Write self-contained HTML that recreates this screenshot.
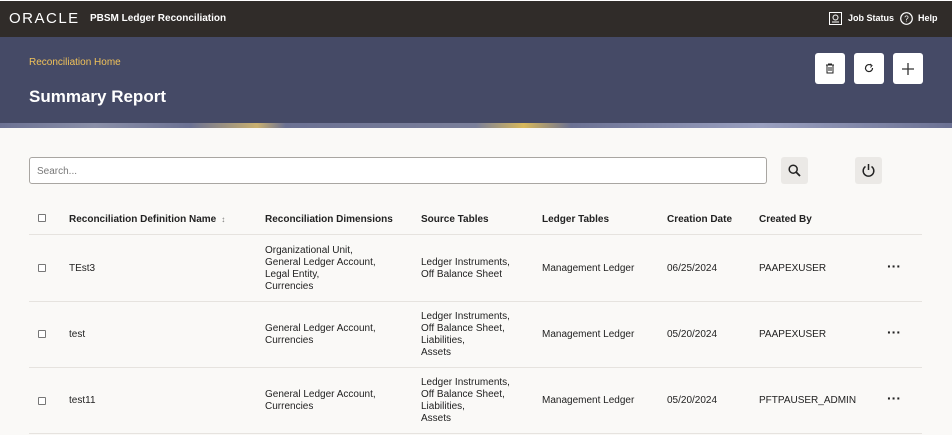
<!DOCTYPE html>
<html><head><meta charset="utf-8"><style>
*{margin:0;padding:0;box-sizing:border-box}
body{width:952px;height:435px;overflow:hidden;background:#faf9f7;font-family:"Liberation Sans",sans-serif;color:#222;position:relative}
.top{position:absolute;left:0;top:0;width:952px;height:37px;background:#302c29;border-top:1px solid #fff}
.band{position:absolute;left:0;top:37px;width:952px;height:86px;background:#454a66}
.pat{position:absolute;left:0;top:123px;width:952px;height:5px;background:linear-gradient(90deg,#6b7193 0,#8a8fa8 10%,#6b7193 20%,#c9b070 27%,#6b7193 30%,#7a7f9a 50%,#d8b85a 55%,#6b7193 60%,#9aa0c0 80%,#6b7193 100%)}
.abs{position:absolute;white-space:nowrap}
.btn{position:absolute;top:53px;width:30px;height:31px;background:#fff;border-radius:3px}
.gbtn{position:absolute;top:157px;width:27px;height:27px;background:#ebe9e6;border-radius:3px}
.search{position:absolute;left:29px;top:157px;width:738px;height:27px;border:1px solid #a9a6a2;border-radius:3px;background:#fff;font-size:10px;color:#777;padding:8px 7px}
.th{position:absolute;top:214px;font-size:10px;font-weight:bold;color:#222}
.line{position:absolute;left:29px;width:893px;height:1px;background:#e6e3df}
.td{position:absolute;font-size:10px;line-height:12px;color:#222}
.cb{position:absolute;left:38px;width:8px;height:8px;border:1px solid #777;border-radius:1px;background:#fff}
.dots{position:absolute;left:887px;font-size:14px;font-weight:bold;letter-spacing:0px}
</style></head><body>
<div class="top"></div>
<div class="abs" style="left:9px;top:10px;color:#fff;font-size:15px;letter-spacing:1.5px">ORACLE</div>
<div class="abs" style="left:90px;top:13px;color:#fff;font-size:10px;font-weight:bold">PBSM Ledger Reconciliation</div>
<svg class="abs" style="left:829px;top:12px" width="13" height="13" viewBox="0 0 13 13"><rect x="0.5" y="0.5" width="12" height="12" fill="none" stroke="#fff"/><circle cx="6.5" cy="5.5" r="2.5" fill="none" stroke="#fff"/><path d="M3 10h7" stroke="#fff"/></svg>
<div class="abs" style="left:848px;top:13px;color:#fff;font-size:9px;font-weight:bold">Job Status</div>
<svg class="abs" style="left:900px;top:12px" width="13" height="13" viewBox="0 0 13 13"><circle cx="6.5" cy="6.5" r="5.8" fill="none" stroke="#fff" stroke-width="1.2"/><text x="6.5" y="9.5" font-size="8" fill="#fff" text-anchor="middle" font-family="Liberation Sans">?</text></svg>
<div class="abs" style="left:918px;top:13px;color:#fff;font-size:9px;font-weight:bold">Help</div>
<div class="band"></div><div class="pat"></div>
<div class="abs" style="left:29px;top:57px;color:#f0c25a;font-size:10px">Reconciliation Home</div>
<div class="abs" style="left:29px;top:87px;color:#fff;font-size:17px;font-weight:bold">Summary Report</div>
<div class="btn" style="left:815px"><svg style="position:absolute;left:10px;top:10px" width="10" height="11" viewBox="0 0 10 11"><path d="M1 2h8M3.5 2V1h3v1M2 2v8h6V2M4 4v4M6 4v4" fill="none" stroke="#222"/></svg></div>
<div class="btn" style="left:854px"><svg style="position:absolute;left:10px;top:10px" width="10" height="10" viewBox="0 0 10 10"><path d="M8.5 5A3.5 3.5 0 1 1 7 2.2" fill="none" stroke="#222" stroke-width="1.2"/><path d="M6 1l2 1.5L6.5 4.5" fill="none" stroke="#222"/></svg></div>
<div class="btn" style="left:893px"><svg style="position:absolute;left:8px;top:9px" width="14" height="14" viewBox="0 0 14 14"><path d="M7 1v12M1 7h12" stroke="#333" stroke-width="1.3"/></svg></div>
<div class="search">Search...</div>
<div class="gbtn" style="left:781px"><svg style="position:absolute;left:7px;top:7px" width="13" height="13" viewBox="0 0 13 13"><circle cx="5.2" cy="5.2" r="4" fill="none" stroke="#222" stroke-width="1.5"/><path d="M8 8l4 4" stroke="#222" stroke-width="1.8"/></svg></div>
<div class="gbtn" style="left:855px"><svg style="position:absolute;left:6px;top:6px" width="15" height="15" viewBox="0 0 15 15"><path d="M4.5 3.5A5.3 5.3 0 1 0 10.5 3.5" fill="none" stroke="#222" stroke-width="1.5"/><path d="M7.5 1v6" stroke="#222" stroke-width="1.5"/></svg></div>
<div class="cb" style="top:214px"></div>
<div class="th" style="left:69px">Reconciliation Definition Name <span style="font-weight:normal;color:#777;font-size:8px">&nbsp;↕</span></div>
<div class="th" style="left:265px">Reconciliation Dimensions</div>
<div class="th" style="left:421px">Source Tables</div>
<div class="th" style="left:542px">Ledger Tables</div>
<div class="th" style="left:667px">Creation Date</div>
<div class="th" style="left:759px">Created By</div>
<div class="line" style="top:234px"></div>
<div class="line" style="top:301px"></div>
<div class="line" style="top:367px"></div>
<div class="line" style="top:433px"></div>

<div class="cb" style="top:264px"></div>
<div class="td" style="left:69px;top:263px">TEst3</div>
<div class="td" style="left:265px;top:245px">Organizational Unit,<br>General Ledger Account,<br>Legal Entity,<br>Currencies</div>
<div class="td" style="left:421px;top:257px">Ledger Instruments,<br>Off Balance Sheet</div>
<div class="td" style="left:542px;top:263px">Management Ledger</div>
<div class="td" style="left:667px;top:263px">06/25/2024</div>
<div class="td" style="left:759px;top:263px">PAAPEXUSER</div>
<div class="dots" style="top:258px">···</div>

<div class="cb" style="top:330px"></div>
<div class="td" style="left:69px;top:329px">test</div>
<div class="td" style="left:265px;top:323px">General Ledger Account,<br>Currencies</div>
<div class="td" style="left:421px;top:311px">Ledger Instruments,<br>Off Balance Sheet,<br>Liabilities,<br>Assets</div>
<div class="td" style="left:542px;top:329px">Management Ledger</div>
<div class="td" style="left:667px;top:329px">05/20/2024</div>
<div class="td" style="left:759px;top:329px">PAAPEXUSER</div>
<div class="dots" style="top:324px">···</div>

<div class="cb" style="top:397px"></div>
<div class="td" style="left:69px;top:395px">test11</div>
<div class="td" style="left:265px;top:389px">General Ledger Account,<br>Currencies</div>
<div class="td" style="left:421px;top:377px">Ledger Instruments,<br>Off Balance Sheet,<br>Liabilities,<br>Assets</div>
<div class="td" style="left:542px;top:395px">Management Ledger</div>
<div class="td" style="left:667px;top:395px">05/20/2024</div>
<div class="td" style="left:759px;top:395px">PFTPAUSER_ADMIN</div>
<div class="dots" style="top:390px">···</div>
</body></html>
